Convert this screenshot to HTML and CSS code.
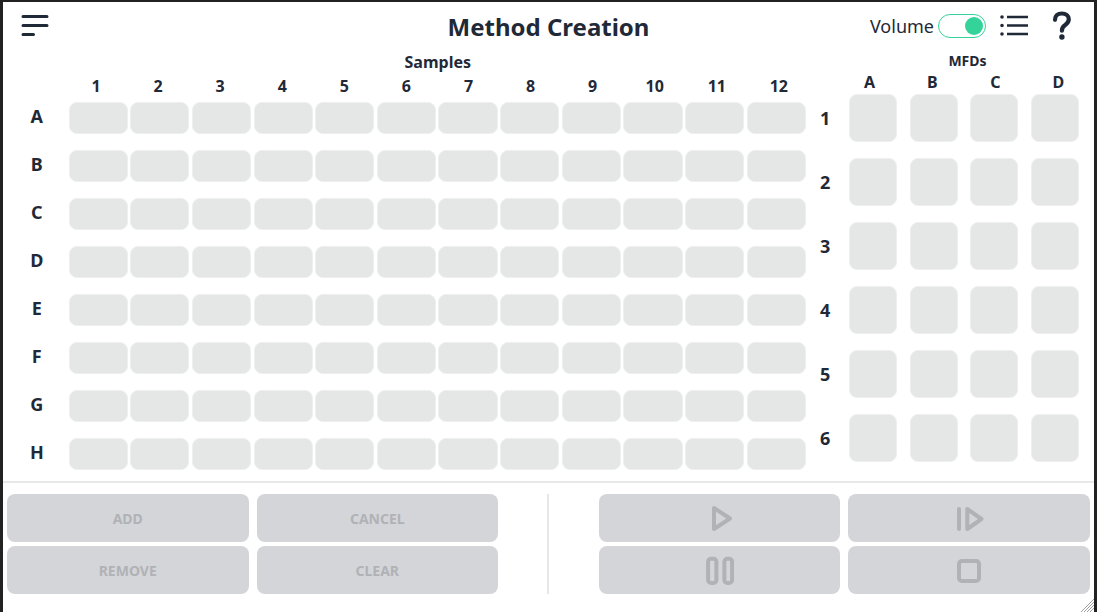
FILE: index.html
```html
<!DOCTYPE html>
<html lang="en">
<head>
<meta charset="utf-8">
<title>Method Creation</title>
<link rel="stylesheet" href="styles.css">
</head>
<body>
<div class="window">
  <header class="header">
    <div class="header-left">
      <svg class="icon-menu" width="30" height="24" viewBox="0 0 30 24"><path d="M2 2.5H26M2 11.5H26M2 20.5H12.5" fill="none" stroke="#1f2937" stroke-width="3" stroke-linecap="round"/></svg>
    </div>
    <h1 class="title">Method Creation</h1>
    <div class="header-right">
      <span class="volume">Volume</span>
      <span class="toggle"><span class="knob"></span></span>
      <svg class="icon-list" width="30" height="22" viewBox="0 0 30 22"><path d="M8 2H29M8 10.5H29M8 19H29" fill="none" stroke="#1f2937" stroke-width="2.5"/><path d="M3 2h.01M3 10.5h.01M3 19h.01" fill="none" stroke="#1f2937" stroke-width="3.6" stroke-linecap="round"/></svg>
      <svg class="icon-help" width="20" height="30" viewBox="0 0 20 30"><path d="M3 8.8C3 4.6 5.8 2.5 9.8 2.5C14 2.5 16.8 4.8 16.8 8.3C16.8 11 15.4 12.5 13.2 14C10.8 15.6 9.9 16.8 9.9 19.7" fill="none" stroke="#1f2937" stroke-width="4.2" stroke-linecap="round"/><circle cx="9.9" cy="26" r="2.7" fill="#1f2937"/></svg>
    </div>
  </header>
  <main class="main">
    <section class="samples">
      <div class="samples-title">Samples</div>
      <div class="col-labels">
        <span>1</span><span>2</span><span>3</span><span>4</span><span>5</span><span>6</span><span>7</span><span>8</span><span>9</span><span>10</span><span>11</span><span>12</span>
      </div>
      <div class="sample-body">
        <div class="row-labels"><span>A</span><span>B</span><span>C</span><span>D</span><span>E</span><span>F</span><span>G</span><span>H</span></div>
        <div class="sample-grid" id="samples"></div>
      </div>
    </section>
    <section class="mfds">
      <div class="mfds-title">MFDs</div>
      <div class="mfd-cols"><span>A</span><span>B</span><span>C</span><span>D</span></div>
      <div class="mfd-body">
        <div class="mfd-rows"><span>1</span><span>2</span><span>3</span><span>4</span><span>5</span><span>6</span></div>
        <div class="mfd-grid" id="mfds"></div>
      </div>
    </section>
  </main>
  <footer class="footer">
    <div class="btn-group">
      <button class="btn">ADD</button>
      <button class="btn">CANCEL</button>
      <button class="btn">REMOVE</button>
      <button class="btn">CLEAR</button>
    </div>
    <div class="vline"></div>
    <div class="btn-group btn-group-right">
      <button class="btn" aria-label="Run"><svg width="30" height="26" viewBox="0 0 30 26"><path d="M10 3V24L26 13.5Z" fill="none" stroke="#b0b2b6" stroke-width="4" stroke-linejoin="round"/></svg></button>
      <button class="btn" aria-label="Step"><svg width="30" height="26" viewBox="0 0 30 26"><path d="M5 4V24" fill="none" stroke="#b0b2b6" stroke-width="4" stroke-linecap="round"/><path d="M13.3 4V24L27.5 14Z" fill="none" stroke="#b0b2b6" stroke-width="4" stroke-linejoin="round"/></svg></button>
      <button class="btn" aria-label="Pause"><svg width="30" height="32" viewBox="0 0 30 32"><rect x="4.1" y="4.7" width="8.3" height="24.3" rx="3" fill="none" stroke="#b0b2b6" stroke-width="4"/><rect x="20.4" y="4.7" width="7.7" height="24.3" rx="3" fill="none" stroke="#b0b2b6" stroke-width="4"/></svg></button>
      <button class="btn" aria-label="Stop"><svg width="24" height="26" viewBox="0 0 24 26"><rect x="2" y="4" width="20" height="20" rx="3" fill="none" stroke="#b0b2b6" stroke-width="4"/></svg></button>
    </div>
  </footer>
  <svg class="resize" width="13" height="13" viewBox="0 0 13 13"><path d="M13 0L0 13M13 3L3 13M13 6L6 13M13 9L9 13" fill="none" stroke="#a0a0a0" stroke-width="1"/></svg>
</div>
<script src="app.js"></script>
</body>
</html>
```
FILE: app.js
```js
function fill(id, count, cls) {
  var host = document.getElementById(id);
  for (var i = 0; i < count; i++) {
    var cell = document.createElement('div');
    cell.className = cls;
    host.appendChild(cell);
  }
}
fill('samples', 96, 'well');
fill('mfds', 24, 'mfd');
```
FILE: styles.css
```css
* { box-sizing: border-box; }
html, body { margin: 0; padding: 0; }
body { font-family: "Noto Sans", sans-serif; color: #1f2937; background: #fff; overflow: hidden; }
.window { position: relative; width: 1097px; height: 612px; border-style: solid; border-color: #222; border-width: 2px 3px 0; background: #fff; overflow: hidden; }

.header { display: grid; grid-template-columns: 1fr auto 1fr; align-items: center; height: 48px; }
.header-left { display: flex; align-items: center; padding-left: 18px; }
.icon-menu { display: block; }
.title { margin: 2px 0 0; font-size: 24px; line-height: 32px; font-weight: 700; }
.header-right { display: flex; align-items: center; justify-content: flex-end; padding-right: 22px; }
.volume { font-size: 18px; line-height: 24px; margin-right: 4px; }
.toggle { display: flex; align-items: center; justify-content: flex-end; width: 48px; height: 24px; padding-right: 2px; border: 1px solid #34d399; border-radius: 12px; background: #fff; margin-right: 13px; }
.knob { width: 18px; height: 18px; border-radius: 50%; background: #34d399; }
.icon-list { display: block; margin-right: 23px; }
.icon-help { display: block; }

.main { display: flex; height: 431px; }
.samples { width: 802.93px; padding-top: 2px; }
.samples-title { height: 20px; margin-left: 66.6px; text-align: center; font-size: 16px; line-height: 20px; font-weight: 700; }
.col-labels { display: grid; grid-template-columns: repeat(12, 1fr); height: 30px; padding-bottom: 2px; margin-left: 62px; margin-right: -4px; align-items: center; text-align: center; font-size: 16px; font-weight: 700; }
.sample-body { display: flex; }
.row-labels { width: 65.58px; padding-left: 2px; display: grid; grid-template-rows: repeat(8, 32px); row-gap: 16px; text-align: center; font-size: 18px; line-height: 28px; font-weight: 700; }
.sample-grid { flex: 1; display: grid; grid-template-columns: repeat(12, 1fr); grid-auto-rows: 32px; column-gap: 2.45px; row-gap: 16px; }
.well, .mfd { background: #e5e6e6; border: 1px solid #eeefef; border-radius: 8px; }

.mfds { flex: 1; padding-top: 3px; }
.mfds-title { height: 16px; padding-left: 35px; text-align: center; font-size: 14px; line-height: 16px; font-weight: 700; }
.mfd-cols { display: grid; grid-template-columns: repeat(4, 63px); height: 25px; margin-left: 32px; align-items: center; text-align: center; font-size: 16px; font-weight: 700; }
.mfd-body { display: flex; }
.mfd-rows { width: 43.07px; display: grid; grid-template-rows: repeat(6, 48px); row-gap: 16px; align-items: center; font-size: 18px; font-weight: 700; padding-left: 14px; }
.mfd-grid { display: grid; grid-template-columns: repeat(4, 48px); grid-auto-rows: 48px; column-gap: 12.67px; row-gap: 16px; }

.footer { display: flex; align-items: stretch; border-top: 2px solid #e8e8e8; padding: 11px 4px 0; height: 115px; }
.btn-group { flex: none; width: 491px; display: grid; grid-template-columns: 1fr 1fr; grid-template-rows: 48px 48px; column-gap: 8px; row-gap: 4px; }
.btn-group-right { width: 491.4px; }
.vline { width: 2px; height: 100px; margin: 0 49.6px 0 49px; background: #e8e8e8; }
.btn { display: flex; align-items: center; justify-content: center; border: 0; border-radius: 8px; background: #d4d5d9; color: #b0b2b6; font-family: inherit; font-size: 14px; font-weight: 700; padding: 0; }
.btn svg { display: block; }

.resize { position: absolute; right: 0; bottom: 0; }
```
